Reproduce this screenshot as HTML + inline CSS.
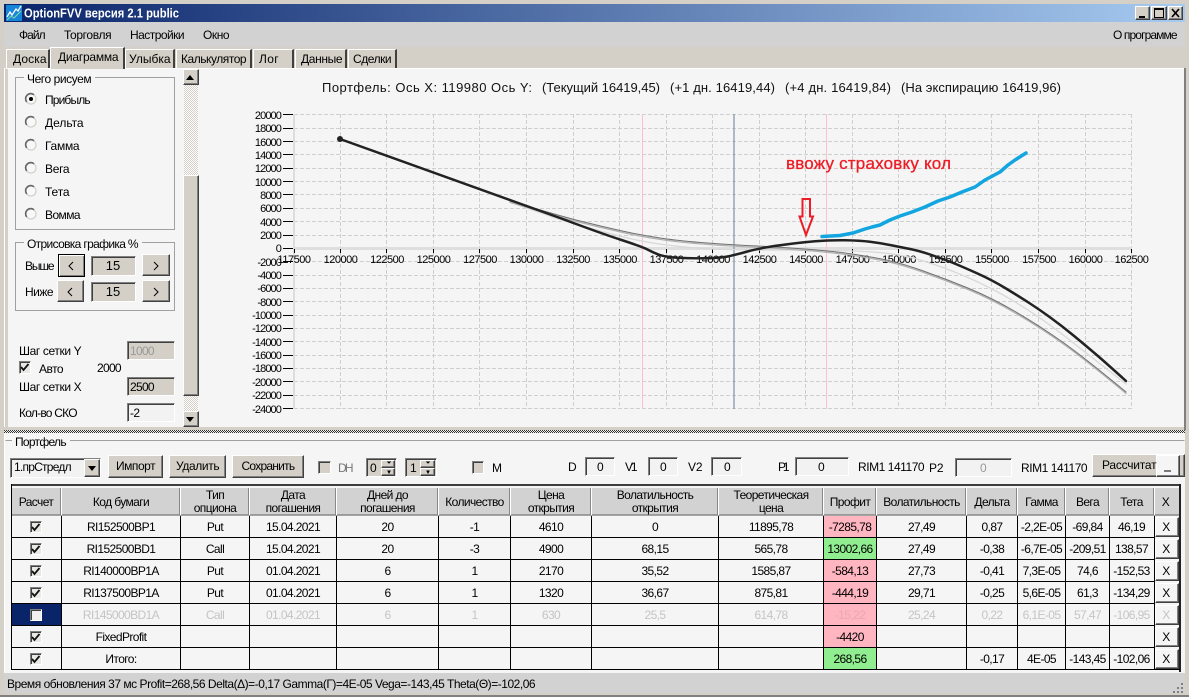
<!DOCTYPE html>
<html><head><meta charset="utf-8"><title>OptionFVV</title>
<style>
html,body{margin:0;padding:0;width:1189px;height:697px;overflow:hidden;background:#d4d0c8}
.a{position:absolute;box-sizing:border-box}
.r{position:absolute;box-sizing:border-box;background:#d4d0c8;border:1px solid;border-color:#fff #404040 #404040 #fff;box-shadow:inset -1px -1px #808080}
.s{position:absolute;box-sizing:border-box;background:#d4d0c8;border:1px solid;border-color:#808080 #fff #fff #808080;box-shadow:inset 1px 1px #404040}
.t{position:absolute;box-sizing:border-box;background:#d4d0c8;border-top:1px solid #fff;border-left:1px solid #fff;border-right:2px solid #404040}
.f{background:#f2f2f2}
svg{position:absolute;left:0;top:0}
text{font-family:"Liberation Sans","DejaVu Sans",sans-serif;font-size:12px;letter-spacing:-.6px;fill:#000}
.m text{text-anchor:middle}
.e text{text-anchor:end;font-size:11px;letter-spacing:-.9px}
.x text{text-anchor:middle;font-size:11px;letter-spacing:-.5px}
.g text{fill:#c4c4c4}
.c text{font-size:13px;letter-spacing:0;fill:#111}
</style></head><body>
<div class="a" style="left:4px;top:4px;width:1181px;height:18px;background:linear-gradient(90deg,#0a246a,#a6caf0)"></div>
<div class="a" style="left:4px;top:22px;width:1181px;height:25px;background:#d2d2d2"></div>
<div class="r" style="left:1135px;top:6px;width:15px;height:14px"></div>
<div class="r" style="left:1151px;top:6px;width:16px;height:14px"></div>
<div class="r" style="left:1168px;top:6px;width:15px;height:14px"></div>

<div class="a" style="left:4px;top:68px;width:1181px;height:359px;background:#f5f5f5;border-top:1px solid #fff;border-left:4px solid #d4d0c8;border-right:1px solid #fff"></div>
<div class="a" style="left:4px;top:68px;width:1px;height:359px;background:#fff"></div>
<div class="a" style="left:1184px;top:68px;width:2px;height:362px;background:#808080"></div>
<div class="t" style="left:6px;top:49px;width:44px;height:19px"></div>
<div class="t" style="left:125px;top:49px;width:50px;height:19px"></div>
<div class="t" style="left:176px;top:49px;width:76px;height:19px"></div>
<div class="t" style="left:253px;top:49px;width:41px;height:19px"></div>
<div class="t" style="left:295px;top:49px;width:52px;height:19px"></div>
<div class="t" style="left:348px;top:49px;width:49px;height:19px"></div>
<div class="t" style="left:50px;top:47px;width:75px;height:22px"></div>

<div class="r" style="left:183px;top:69px;width:16px;height:16px"></div>
<div class="r" style="left:183px;top:175px;width:16px;height:221px"></div>
<div class="r" style="left:183px;top:411px;width:16px;height:16px"></div>

<div class="r" style="left:58px;top:254px;width:27px;height:23px;border:1px solid #000;box-shadow:inset 1px 1px #fff,inset -1px -1px #808080"></div>
<div class="s" style="left:91px;top:256px;width:45px;height:20px"></div>
<div class="r" style="left:142px;top:254px;width:28px;height:22px"></div>
<div class="r" style="left:57px;top:280px;width:27px;height:22px"></div>
<div class="s" style="left:91px;top:282px;width:45px;height:20px"></div>
<div class="r" style="left:142px;top:280px;width:28px;height:22px"></div>
<div class="s" style="left:127px;top:341px;width:48px;height:19px"></div>
<div class="s" style="left:127px;top:377px;width:48px;height:19px"></div>
<div class="s f" style="left:127px;top:403px;width:48px;height:19px"></div>
<div class="s" style="left:19px;top:361px;width:12px;height:13px;background:#e8e8e4"></div>

<div class="a" style="left:4px;top:433px;width:1181px;height:240px;background:#f5f5f5;border-left:1px solid #fff"></div>
<div class="a" style="left:4px;top:673px;width:1181px;height:20px;background:#d2d2d2"></div>

<div class="s f" style="left:10px;top:458px;width:91px;height:20px"></div>
<div class="r" style="left:84px;top:459px;width:16px;height:18px"></div>
<div class="r" style="left:108px;top:455px;width:55px;height:23px"></div>
<div class="r" style="left:169px;top:455px;width:57px;height:23px"></div>
<div class="r" style="left:232px;top:455px;width:72px;height:23px"></div>
<div class="s" style="left:318px;top:461px;width:13px;height:13px"></div>
<div class="s" style="left:366px;top:458px;width:31px;height:19px"></div>
<div class="r" style="left:381px;top:460px;width:14px;height:8px"></div>
<div class="r" style="left:381px;top:468px;width:14px;height:8px"></div>
<div class="s" style="left:405px;top:458px;width:32px;height:19px"></div>
<div class="r" style="left:420px;top:460px;width:15px;height:8px"></div>
<div class="r" style="left:420px;top:468px;width:15px;height:8px"></div>
<div class="s" style="left:472px;top:461px;width:12px;height:13px"></div>
<div class="s f" style="left:585px;top:457px;width:30px;height:19px"></div>
<div class="s f" style="left:648px;top:457px;width:30px;height:19px"></div>
<div class="s f" style="left:711px;top:457px;width:31px;height:19px"></div>
<div class="s f" style="left:795px;top:457px;width:54px;height:19px"></div>
<div class="s f" style="left:955px;top:458px;width:57px;height:19px"></div>
<div class="r" style="left:1092px;top:454px;width:93px;height:23px"></div>
<div class="r" style="left:1156px;top:455px;width:24px;height:22px;background:#f5f5f5"></div>

<div class="a" style="left:12px;top:488px;width:1167px;height:27px;background:#d2d2d2"></div>
<div class="a" style="left:824px;top:516px;width:52px;height:21px;background:#ffb6c1"></div>
<div class="a" style="left:824px;top:538px;width:52px;height:21px;background:#90ee90"></div>
<div class="a" style="left:824px;top:560px;width:52px;height:21px;background:#ffb6c1"></div>
<div class="a" style="left:824px;top:582px;width:52px;height:21px;background:#ffb6c1"></div>
<div class="a" style="left:824px;top:604px;width:52px;height:21px;background:#ffb6c1"></div>
<div class="a" style="left:824px;top:626px;width:52px;height:21px;background:#ffb6c1"></div>
<div class="a" style="left:824px;top:648px;width:52px;height:21px;background:#90ee90"></div>
<div class="a" style="left:12px;top:604px;width:49px;height:21px;background:#0a246a"></div>

<div class="s" style="left:30px;top:521px;width:12px;height:12px;background:#e8e8e4"></div>
<div class="s" style="left:30px;top:543px;width:12px;height:12px;background:#e8e8e4"></div>
<div class="s" style="left:30px;top:565px;width:12px;height:12px;background:#e8e8e4"></div>
<div class="s" style="left:30px;top:587px;width:12px;height:12px;background:#e8e8e4"></div>
<div class="s" style="left:30px;top:609px;width:12px;height:12px;background:#f0f0f0"></div>
<div class="s" style="left:30px;top:631px;width:12px;height:12px;background:#e8e8e4"></div>
<div class="s" style="left:30px;top:653px;width:12px;height:12px;background:#e8e8e4"></div>

<div class="r" style="left:1155px;top:517px;width:24px;height:20px;background:#f5f5f5"></div>
<div class="r" style="left:1155px;top:539px;width:24px;height:20px;background:#f5f5f5"></div>
<div class="r" style="left:1155px;top:561px;width:24px;height:20px;background:#f5f5f5"></div>
<div class="r" style="left:1155px;top:583px;width:24px;height:20px;background:#f5f5f5"></div>
<div class="r" style="left:1155px;top:605px;width:24px;height:20px;background:#f5f5f5"></div>
<div class="r" style="left:1155px;top:627px;width:24px;height:20px;background:#f5f5f5"></div>
<div class="r" style="left:1155px;top:649px;width:24px;height:20px;background:#f5f5f5"></div>

<svg width="1189" height="697" viewBox="0 0 1189 697" xmlns="http://www.w3.org/2000/svg">
<defs>
<pattern id="h1" width="2" height="2" patternUnits="userSpaceOnUse"><rect width="2" height="2" fill="#fff"/><rect width="1" height="1" fill="#d4d0c8"/><rect x="1" y="1" width="1" height="1" fill="#d4d0c8"/></pattern>
<pattern id="h2" width="2" height="2" patternUnits="userSpaceOnUse"><rect width="2" height="2" fill="#eee"/><rect width="1" height="1" fill="#333"/><rect x="1" y="1" width="1" height="1" fill="#333"/></pattern>
<g id="rd"><circle r="5" fill="#f8f8f8" stroke="#d4d0c8" stroke-width="1.2"/><path d="M-4.300 3A5.200 5.200 0 0 1 3 -4.300" fill="none" stroke="#666" stroke-width="1.600"/></g>
<path id="ck" d="M0 3L2.500 6L7.500 0" fill="none" stroke="#111" stroke-width="1.800"/>
</defs>

<!-- title -->
<rect x="6" y="5" width="16" height="16" fill="#1786d8"/>
<path d="M7 17L10 12L12 15L16 9L18 11L21 6" fill="none" stroke="#fff" stroke-width="1.300"/>
<path d="M7 20L11 16L14 18L21 11" fill="none" stroke="#7fe0a0" stroke-width="1"/>
<text x="24" y="17.500" textLength="155" lengthAdjust="spacingAndGlyphs" style="font-weight:bold;font-size:13px;letter-spacing:0;fill:#fff">OptionFVV версия 2.1 public</text>
<path d="M1139 17H1145" stroke="#000" stroke-width="2"/>
<rect x="1154.500" y="8.500" width="9" height="9" fill="none" stroke="#000"/><path d="M1154 9H1164" stroke="#000" stroke-width="2"/>
<path d="M1172 9L1179 17M1179 9L1172 17" stroke="#000" stroke-width="1.700"/>

<!-- menu -->
<text x="19" y="39" textLength="26">Файл</text>
<text x="64" y="39" textLength="47">Торговля</text>
<text x="130" y="39" textLength="54">Настройки</text>
<text x="203" y="39" textLength="26">Окно</text>
<text x="1113" y="39" textLength="64">О программе</text>

<!-- tabs -->
<text x="13" y="63" textLength="33">Доска</text>
<text x="58" y="61" textLength="60">Диаграмма</text>
<text x="129" y="63" textLength="41">Улыбка</text>
<text x="181" y="63" textLength="65">Калькулятор</text>
<text x="259" y="63" textLength="19">Лог</text>
<text x="301" y="63" textLength="41">Данные</text>
<text x="353" y="63" textLength="38">Сделки</text>

<!-- left panel -->
<rect x="184" y="85" width="14" height="90" fill="url(#h1)"/>
<rect x="184" y="396" width="14" height="15" fill="url(#h1)"/>
<path d="M186 80L194 80L190 75Z"/><path d="M186 417L194 417L190 422Z"/>
<rect x="15.500" y="77.500" width="159" height="152" fill="none" stroke="#a0a0a0"/>
<rect x="24" y="74" width="71" height="8" fill="#f5f5f5"/>
<text x="27" y="83" textLength="64">Чего рисуем</text>
<use href="#rd" x="31" y="99"/><circle cx="31" cy="99" r="2" fill="#000"/>
<use href="#rd" x="31" y="122"/><use href="#rd" x="31" y="145"/><use href="#rd" x="31" y="168"/><use href="#rd" x="31" y="191"/><use href="#rd" x="31" y="214"/>
<text x="45" y="104" textLength="45">Прибыль</text>
<text x="45" y="127" textLength="38">Дельта</text>
<text x="45" y="150" textLength="34">Гамма</text>
<text x="45" y="173" textLength="24">Вега</text>
<text x="45" y="196" textLength="24">Тета</text>
<text x="45" y="219" textLength="35">Вомма</text>
<rect x="15.500" y="242.500" width="159" height="68" fill="none" stroke="#a0a0a0"/>
<rect x="24" y="239" width="118" height="8" fill="#f5f5f5"/>
<text x="27" y="248" textLength="111">Отрисовка графика %</text>
<text x="25" y="270" textLength="29">Выше</text>
<text x="25" y="296" textLength="28">Ниже</text>
<path d="M73 262L69 266L73 270M154 262L158 266L154 270M72 288L68 292L72 296M154 288L158 292L154 296" fill="none" stroke="#000"/>
<text x="113" y="270" text-anchor="middle" style="font-size:13px;letter-spacing:0">15</text>
<text x="113" y="296" text-anchor="middle" style="font-size:13px;letter-spacing:0">15</text>
<text x="19" y="355" textLength="62">Шаг сетки Y</text>
<text x="130" y="355" textLength="24" style="fill:#999">1000</text>
<use href="#ck" x="21" y="364"/>
<text x="39" y="373" textLength="24">Авто</text>
<text x="97" y="372" textLength="24">2000</text>
<text x="19" y="391" textLength="62">Шаг сетки X</text>
<text x="130" y="391" textLength="24">2500</text>
<text x="19" y="417" textLength="58">Кол-во СКО</text>
<text x="130" y="417">-2</text>

<!-- chart -->
<g class="c">
<text x="322" y="92" textLength="210">Портфель: Ось X: 119980 Ось Y:</text>
<text x="542" y="92" textLength="118">(Текущий 16419,45)</text>
<text x="670" y="92" textLength="105">(+1 дн. 16419,44)</text>
<text x="785" y="92" textLength="106">(+4 дн. 16419,84)</text>
<text x="901" y="92" textLength="160">(На экспирацию 16419,96)</text>
</g>
<path fill="none" stroke="#cfcfcf" stroke-dasharray="4 2" d="M294 114.500H1132M294 128.500H1132M294 141.500H1132M294 154.500H1132M294 168.500H1132M294 181.500H1132M294 194.500H1132M294 208.500H1132M294 221.500H1132M294 235.500H1132M294 261.500H1132M294 275.500H1132M294 288.500H1132M294 301.500H1132M294 315.500H1132M294 328.500H1132M294 341.500H1132M294 355.500H1132M294 368.500H1132M294 381.500H1132M294 395.500H1132M294 408.500H1132M340.500 114V409M386.500 114V409M433.500 114V409M479.500 114V409M526.500 114V409M573.500 114V409M619.500 114V409M666.500 114V409M712.500 114V409M759.500 114V409M805.500 114V409M852.500 114V409M898.500 114V409M945.500 114V409M991.500 114V409M1038.500 114V409M1085.500 114V409M1131.500 114V409"/>
<rect x="293" y="114" width="2" height="295" fill="#dcdcdc"/>
<rect x="293" y="247" width="839" height="3" fill="#dedede"/>
<path d="M642.500 114V409M826.500 114V409" stroke="#ffc0cb"/>
<path d="M734 114V409" stroke="#7f8fa8" stroke-width="1.200"/>
<path stroke="#000" d="M283 114.500H293M283 128.500H293M283 141.500H293M283 154.500H293M283 168.500H293M283 181.500H293M283 194.500H293M283 208.500H293M283 221.500H293M283 235.500H293M283 248.500H293M283 261.500H293M283 275.500H293M283 288.500H293M283 301.500H293M283 315.500H293M283 328.500H293M283 341.500H293M283 355.500H293M283 368.500H293M283 381.500H293M283 395.500H293M283 408.500H293M294.500 249V253M340.500 249V253M386.500 249V253M433.500 249V253M479.500 249V253M526.500 249V253M573.500 249V253M619.500 249V253M666.500 249V253M712.500 249V253M759.500 249V253M805.500 249V253M852.500 249V253M898.500 249V253M945.500 249V253M991.500 249V253M1038.500 249V253M1085.500 249V253M1131.500 249V253"/>
<g class="e">
<text x="281" y="119">20000</text><text x="281" y="132">18000</text><text x="281" y="146">16000</text><text x="281" y="159">14000</text><text x="281" y="172">12000</text><text x="281" y="186">10000</text><text x="281" y="199">8000</text><text x="281" y="212">6000</text><text x="281" y="226">4000</text><text x="281" y="239">2000</text><text x="281" y="252">0</text>
<text x="281" y="266">-2000</text><text x="281" y="279">-4000</text><text x="281" y="292">-6000</text><text x="281" y="306">-8000</text><text x="281" y="319">-10000</text><text x="281" y="332">-12000</text><text x="281" y="346">-14000</text><text x="281" y="359">-16000</text><text x="281" y="372">-18000</text><text x="281" y="386">-20000</text><text x="281" y="399">-22000</text><text x="281" y="413">-24000</text>
</g>
<g class="x">
<text x="294" y="263">117500</text><text x="340.500" y="263">120000</text><text x="387" y="263">122500</text><text x="433.500" y="263">125000</text><text x="480" y="263">127500</text><text x="526.500" y="263">130000</text><text x="573" y="263">132500</text><text x="620" y="263">135000</text><text x="666.500" y="263">137500</text><text x="713" y="263">140000</text><text x="759.500" y="263">142500</text><text x="806" y="263">145000</text><text x="852.500" y="263">147500</text><text x="899" y="263">150000</text><text x="945.500" y="263">152500</text><text x="992" y="263">155000</text><text x="1039" y="263">157500</text><text x="1085.500" y="263">160000</text><text x="1131.500" y="263">162500</text>
</g>
<g fill="none" stroke-linejoin="round" stroke-linecap="round">
<path stroke="#d8d8d8" stroke-width="1.300" d="M510 202Q560 220 580 225.500Q600 231 621.500 236.500Q643 242 666.500 245Q690 248 712.500 249Q735 250 782.500 250Q830 250 864 251.500Q898 253 922 260.500Q946 268 969 278Q992 288 1016 302.500Q1040 317 1062.500 334.500Q1085 352 1126 384"/>
<path stroke="#b0b0b0" stroke-width="1.300" transform="translate(0,1.400)" d="M510 201Q560 216 580 221Q600 226 620 230.500Q640 235 660 238Q680 241 707.500 243Q735 245 757.500 246Q780 247 805 249Q830 251 845 253Q860 255 879 258.500Q898 262 922 270.500Q946 279 969 288.500Q992 298 1016 312Q1040 326 1062.500 342Q1085 358 1126 392"/>
<path stroke="#707070" stroke-width="1" d="M510 201Q560 216 580 221Q600 226 620 230.500Q640 235 660 238Q680 241 707.500 243Q735 245 757.500 246Q780 247 805 249Q830 251 845 253Q860 255 879 258.500Q898 262 922 270.500Q946 279 969 288.500Q992 298 1016 312Q1040 326 1062.500 342Q1085 358 1126 392"/>
<path stroke="#222222" stroke-width="2.500" d="M340 139L560 218Q600 233 621.500 240Q643 247 647.500 249.500Q652 252 658.500 254.500Q665 257 677.500 257.750Q690 258.500 705 258.250Q720 258 727.500 256.500Q735 255 747.500 251.500Q760 248 780 245.250Q800 242.500 815 241.250Q830 240 845 240.250Q860 240.500 870 241.750Q880 243 890 245Q900 247 910 249Q920 251 933 255.500Q946 260 954.500 263.500Q963 267 977.500 273.500Q992 280 1006 288.500Q1020 297 1030 303.500Q1040 310 1051 318Q1062 326 1073.500 335.500Q1085 345 1095 353.500Q1105 362 1126 381"/>
<path stroke="#12a5e0" stroke-width="3.500" d="M822 236.500L840 235.500L853 233L865 229L872 227L880 225L890 220L900 216L912 212L925 207L938 201L950 197L962 192L975 187L985 180L1000 172L1008 165L1015 160L1026 153"/>
<path stroke="#ee1c25" stroke-width="2" stroke-linejoin="miter" d="M802.500 199H810V216.500H813L806 235L799.500 216.500H802.500Z"/>
</g>
<circle cx="340" cy="139" r="3" fill="#222"/>
<text x="786" y="169" textLength="165" style="font-size:17px;letter-spacing:0;fill:#ee1c25;stroke:#ee1c25;stroke-width:.3px">ввожу страховку кол</text>

<!-- splitter -->
<rect x="4" y="430" width="1181" height="3" fill="url(#h2)"/>

<!-- portfolio controls -->
<path d="M5.500 440.500H1184.500" stroke="#a0a0a0"/>
<rect x="12" y="437" width="58" height="8" fill="#f5f5f5"/>
<text x="15" y="446" textLength="51">Портфель</text>
<text x="14" y="471" textLength="57">1.прСтредл</text>
<path d="M88 466H96L92 471Z"/>
<text x="135.500" y="470" text-anchor="middle" textLength="39">Импорт</text>
<text x="197.500" y="470" text-anchor="middle" textLength="43">Удалить</text>
<text x="268" y="470" text-anchor="middle" textLength="53">Сохранить</text>
<text x="338" y="472" textLength="15" style="fill:#777">DH</text>
<text x="370" y="472">0</text><text x="410" y="472">1</text>
<path d="M388 462H390L389 463ZM388 471H390L389 473ZM427 462H429L428 463ZM427 471H429L428 473Z" stroke="#000"/>
<text x="492" y="472" textLength="9">M</text>
<text x="568" y="471">D</text><text x="600" y="471" text-anchor="middle">0</text>
<text x="625" y="471" textLength="12">V1</text><text x="663" y="471" text-anchor="middle">0</text>
<text x="688" y="471" textLength="14">V2</text><text x="727" y="471" text-anchor="middle">0</text>
<text x="778" y="471" textLength="11">P1</text><text x="821" y="471" text-anchor="middle">0</text>
<text x="858" y="471" textLength="66">RIM1 141170</text><text x="929" y="472" textLength="14">P2</text>
<text x="983" y="472" text-anchor="middle" style="fill:#999">0</text>
<text x="1021" y="472" textLength="66">RIM1 141170</text>
<text x="1102" y="469" textLength="54">Рассчитат</text>
<path d="M1164 471H1171" stroke="#000"/>

<!-- table -->
<path d="M11 485H1180" stroke="#000" stroke-width="1.600"/>
<path d="M11.500 484V669.500" stroke="#000"/>
<path d="M1180 484V672" stroke="#222" stroke-width="2"/>
<path stroke="#888" stroke-width="1.500" d="M12 515H1179"/>
<path stroke="#fff" d="M61.500 488V515M180.500 488V515M249.500 488V515M336.500 488V515M438.500 488V515M510.500 488V515M591.500 488V515M718.500 488V515M823.500 488V515M876.500 488V515M966.500 488V515M1017.500 488V515M1065.500 488V515M1109.500 488V515M1154.500 488V515"/>
<path stroke="#888" d="M60.500 488V515M179.500 488V515M248.500 488V515M335.500 488V515M437.500 488V515M509.500 488V515M590.500 488V515M717.500 488V515M822.500 488V515M875.500 488V515M965.500 488V515M1016.500 488V515M1064.500 488V515M1108.500 488V515M1153.500 488V515"/>
<path stroke="#000" d="M12 537.500H1154M12 559.500H1154M12 581.500H1154M12 603.500H1154M12 625.500H1154M12 647.500H1154M11 669.500H1180M61.500 516V670M180.500 516V670M249.500 516V670M336.500 516V670M438.500 516V670M510.500 516V670M591.500 516V670M718.500 516V670M823.500 516V670M876.500 516V670M966.500 516V670M1017.500 516V670M1065.500 516V670M1109.500 516V670M1154.500 516V670"/>
<g class="m">
<text x="36" y="506">Расчет</text><text x="121" y="506">Код бумаги</text>
<text x="215" y="499">Тип</text><text x="215" y="512">опциона</text>
<text x="293" y="499">Дата</text><text x="293" y="512">погашения</text>
<text x="387.500" y="499">Дней до</text><text x="387.500" y="512">погашения</text>
<text x="474.500" y="506">Количество</text>
<text x="551" y="499">Цена</text><text x="551" y="512">открытия</text>
<text x="655" y="499">Волатильность</text><text x="655" y="512">открытия</text>
<text x="771" y="499">Теоретическая</text><text x="771" y="512">цена</text>
<text x="850" y="506">Профит</text><text x="921.500" y="506">Волатильность</text><text x="992" y="506">Дельта</text><text x="1041.500" y="506">Гамма</text><text x="1087.500" y="506">Вега</text><text x="1131.500" y="506">Тета</text><text x="1165.500" y="506">X</text>

<text x="121" y="531">RI152500BP1</text><text x="215" y="531">Put</text><text x="293" y="531">15.04.2021</text><text x="387.500" y="531">20</text><text x="474.500" y="531">-1</text><text x="551" y="531">4610</text><text x="655" y="531">0</text><text x="771" y="531">11895,78</text><text x="850" y="531">-7285,78</text><text x="921.500" y="531">27,49</text><text x="992" y="531">0,87</text><text x="1041.500" y="531">-2,2E-05</text><text x="1087.500" y="531">-69,84</text><text x="1131.500" y="531">46,19</text>

<text x="121" y="553">RI152500BD1</text><text x="215" y="553">Call</text><text x="293" y="553">15.04.2021</text><text x="387.500" y="553">20</text><text x="474.500" y="553">-3</text><text x="551" y="553">4900</text><text x="655" y="553">68,15</text><text x="771" y="553">565,78</text><text x="850" y="553">13002,66</text><text x="921.500" y="553">27,49</text><text x="992" y="553">-0,38</text><text x="1041.500" y="553">-6,7E-05</text><text x="1087.500" y="553">-209,51</text><text x="1131.500" y="553">138,57</text>

<text x="121" y="575">RI140000BP1A</text><text x="215" y="575">Put</text><text x="293" y="575">01.04.2021</text><text x="387.500" y="575">6</text><text x="474.500" y="575">1</text><text x="551" y="575">2170</text><text x="655" y="575">35,52</text><text x="771" y="575">1585,87</text><text x="850" y="575">-584,13</text><text x="921.500" y="575">27,73</text><text x="992" y="575">-0,41</text><text x="1041.500" y="575">7,3E-05</text><text x="1087.500" y="575">74,6</text><text x="1131.500" y="575">-152,53</text>

<text x="121" y="597">RI137500BP1A</text><text x="215" y="597">Put</text><text x="293" y="597">01.04.2021</text><text x="387.500" y="597">6</text><text x="474.500" y="597">1</text><text x="551" y="597">1320</text><text x="655" y="597">36,67</text><text x="771" y="597">875,81</text><text x="850" y="597">-444,19</text><text x="921.500" y="597">29,71</text><text x="992" y="597">-0,25</text><text x="1041.500" y="597">5,6E-05</text><text x="1087.500" y="597">61,3</text><text x="1131.500" y="597">-134,29</text>

<text x="121" y="641">FixedProfit</text><text x="850" y="641">-4420</text>
<text x="121" y="663">Итого:</text><text x="850" y="663">268,56</text><text x="992" y="663">-0,17</text><text x="1041.500" y="663">4E-05</text><text x="1087.500" y="663">-143,45</text><text x="1131.500" y="663">-102,06</text>

<text x="1166" y="531">X</text><text x="1166" y="553">X</text><text x="1166" y="575">X</text><text x="1166" y="597">X</text><text x="1166" y="641">X</text><text x="1166" y="663">X</text>
</g>
<g class="m g">
<text x="121" y="619">RI145000BD1A</text><text x="215" y="619">Call</text><text x="293" y="619">01.04.2021</text><text x="387.500" y="619">6</text><text x="474.500" y="619">1</text><text x="551" y="619">630</text><text x="655" y="619">25,5</text><text x="771" y="619">614,78</text><text x="850" y="619" style="fill:#e8a8b4">-15,22</text><text x="921.500" y="619">25,24</text><text x="992" y="619">0,22</text><text x="1041.500" y="619">6,1E-05</text><text x="1087.500" y="619">57,47</text><text x="1131.500" y="619">-106,95</text><text x="1166" y="619">X</text>
</g>
<use href="#ck" x="32" y="524"/><use href="#ck" x="32" y="546"/><use href="#ck" x="32" y="568"/><use href="#ck" x="32" y="590"/><use href="#ck" x="32" y="634"/><use href="#ck" x="32" y="656"/>

<!-- status -->
<text x="7" y="688" textLength="528">Время обновления 37 мс  Profit=268,56 Delta(Δ)=-0,17 Gamma(Г)=4E-05 Vega=-143,45 Theta(Θ)=-102,06</text>
<path d="M1173 692H1175M1177 692H1179M1181 692H1183M1177 688H1179M1181 688H1183M1181 684H1183" stroke="#808080" stroke-width="2"/>
<rect x="0" y="695" width="1189" height="2" fill="#808080"/>
</svg>
</body></html>
